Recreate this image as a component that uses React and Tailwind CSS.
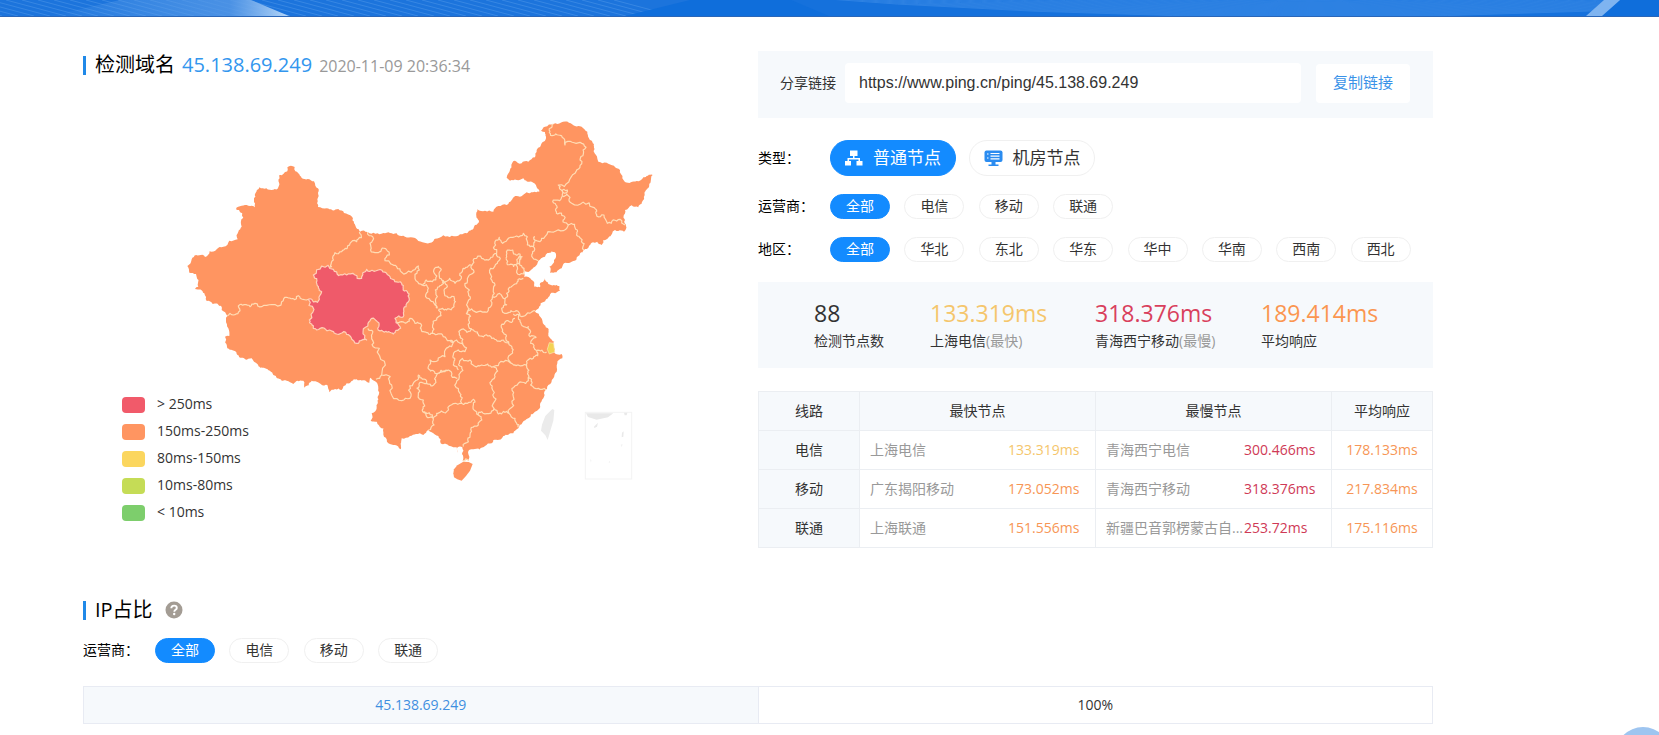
import { useState } from "react";

/* ---------- China map data (three units per pixel) ---------- */

const OUTLINE = "352,172 374,171 376,184 390,197 395,204 413,207 432,214 436,227 446,238 446,258 442,268 444,291 470,295 505,297 522,309 546,320 552,340 570,365 593,366 640,369 680,370 700,377 722,382 745,393 770,400 795,386 820,376 870,373 895,365 915,345 927,332 919,318 922,298 945,302 970,305 985,288 1010,285 1025,270 1035,258 1070,247 1108,245 1100,232 1085,215 1060,205 1040,210 1020,212 1010,203 1020,180 1035,152 1055,160 1075,155 1095,142 1100,120 1120,95 1128,80 1125,66 1113,62 1125,50 1150,42 1197,38 1215,48 1235,50 1252,65 1257,85 1272,110 1278,135 1285,155 1310,158 1332,167 1350,180 1357,205 1365,216 1400,213 1420,202 1448,195 1442,215 1428,240 1422,268 1405,292 1385,286 1365,300 1365,330 1368,348 1362,365 1345,363 1335,360 1315,383 1300,390 1295,405 1265,398 1242,420 1222,440 1200,458 1182,460 1175,475 1140,488 1138,470 1152,450 1158,432 1145,424 1125,440 1105,453 1095,470 1060,482 1062,500 1085,510 1093,530 1110,532 1125,505 1135,522 1168,528 1170,542 1150,548 1135,562 1112,580 1102,598 1095,605 1112,622 1123,645 1135,670 1140,685 1153,695 1150,710 1153,728 1175,732 1177,745 1162,760 1160,785 1150,805 1135,825 1123,845 1120,865 1110,885 1095,905 1075,925 1045,955 1030,970 1000,978 970,990 965,1000 945,1008 910,1018 897,1020 895,1032 895,1050 878,1052 876,1032 877,1012 863,1012 863,1028 860,1012 840,1008 812,1000 805,978 785,967 775,960 760,975 738,972 720,978 695,985 692,1018 675,1005 655,1000 642,980 640,955 620,935 602,932 605,910 620,890 623,860 625,835 612,812 602,803 598,818 590,815 560,808 530,820 515,840 478,847 472,825 440,815 425,812 402,833 400,812 382,812 370,822 350,812 335,812 310,795 285,775 262,762 245,745 225,748 200,732 172,715 165,680 178,678 175,655 168,630 172,618 155,600 153,587 128,582 110,573 103,550 75,537 85,530 78,492 58,488 52,468 65,448 97,434 105,441 140,418 160,410 203,388 205,365 215,350 207,300 198,298 235,287 255,292 252,270 268,232 310,239 325,232 328,195 352,184";

const HAINAN = "880,1055 896,1056 908,1062 900,1082 888,1098 875,1112 862,1108 852,1102 850,1090 852,1078 862,1066";

const QINGHAI = "430,495 490,478 530,495 575,505 590,478 612,484 625,480 660,500 695,520 712,545 718,570 708,590 700,620 675,625 678,638 692,655 670,672 640,665 622,635 605,625 594,640 590,690 565,700 548,690 540,678 500,672 470,662 430,655 418,630 415,568 448,568 455,545 440,520";

const BORDERS = [
  "172,618 190,615 205,588 240,590 255,580 275,590 335,575 350,562 385,557 418,568",
  "568,366 560,395 540,400 515,425 495,428 490,450 478,475",
  "593,366 600,400 620,428 650,420 658,435 645,452 680,470 695,487 745,468 748,480 735,500 738,512 757,526",
  "757,526 787,515 792,478 805,470 812,482 808,500 820,512 802,535 802,560 798,580 802,595",
  "757,526 775,535 780,570 795,585 802,595",
  "820,512 822,540 852,560 852,590 830,600 805,598",
  "805,600 800,630 788,645 788,670",
  "820,515 855,520 870,490 895,468 905,465",
  "905,465 895,500 898,540 892,580 890,613",
  "905,467 935,445 970,435 980,430 975,395 988,382 998,400 1040,378 1060,370 1072,380 1072,405 1090,410 1093,380 1110,395 1125,380 1180,362 1195,345",
  "1090,410 1088,425 1105,452",
  "1195,345 1182,318 1163,312 1158,285 1150,270 1175,262 1178,245 1165,225 1215,190 1230,150 1248,112 1230,97 1185,105 1165,75 1138,68 1150,42",
  "1178,245 1182,238 1192,240 1190,248 1178,247",
  "1178,258 1200,262 1205,280 1270,292 1280,318 1302,315 1312,340 1350,328 1366,345",
  "1195,345 1222,360 1232,385 1242,420",
  "1008,445 1028,420 1050,432 1048,460 1012,464 1008,445",
  "1045,445 1056,440 1062,475 1060,492 1040,488 1038,465 1045,445",
  "980,432 982,460 965,500 970,540 967,560",
  "967,560 1005,567 1010,550 1035,522 1060,505",
  "1005,567 995,595 1010,610 1038,602 1050,618 1070,612 1085,606 1095,602",
  "890,613 925,605 965,585 967,560",
  "888,610 898,635 910,660 930,678 965,685 1000,690 1018,705",
  "905,655 875,658 868,675 880,705",
  "675,650 695,635 720,625 735,640 750,640 760,665 788,670 820,680 860,690 880,700",
  "840,690 845,710 825,740 780,750 775,770 795,790 820,785 835,780 862,805",
  "880,705 885,725 850,735 850,765 865,780",
  "865,765 900,750 935,765 970,770 1020,758 1045,765 1070,768",
  "1018,705 1020,735 1022,758",
  "1035,625 1010,632 998,660 1008,690 1018,705",
  "1030,612 1050,630 1075,650 1080,680 1098,682 1082,700 1100,722 1130,726",
  "1100,722 1090,745 1070,768 1075,795 1082,825 1105,835 1128,840",
  "1075,800 1045,820 1030,860 1017,910",
  "970,770 975,800 968,840 972,895",
  "925,915 935,905 972,895 985,912 1017,910 1035,925 1045,952",
  "925,915 925,945 900,975 880,1010",
  "758,905 770,920 800,910 830,905 870,880 910,868 912,900 925,915",
  "865,765 868,800 870,850 875,878",
  "740,835 770,820 795,820 800,795 832,780",
  "740,835 745,855 760,870 758,905 790,925 792,945 775,960",
  "635,795 665,825 695,872 720,865 730,820 745,795 770,818",
  "594,655 605,680 628,715 635,795 618,808",
  "878,1053 896,1053",
];

/* Midpoint displacement gives the coast and the borders their rough edge. */
function roughen(data, closed, strength) {
  let pts = data.split(" ").map((p) => p.split(",").map(Number));
  if (closed) pts.push(pts[0]);
  let seed = 7;
  const rand = () => {
    seed = (seed * 16807) % 2147483647;
    return seed / 2147483647 - 0.5;
  };
  for (let pass = 0; pass < 3; pass++) {
    const next = [pts[0]];
    for (let i = 1; i < pts.length; i++) {
      const [ax, ay] = pts[i - 1];
      const [bx, by] = pts[i];
      const dx = bx - ax;
      const dy = by - ay;
      if (Math.hypot(dx, dy) > 7) {
        const k = rand() * strength;
        next.push([(ax + bx) / 2 - dy * k, (ay + by) / 2 + dx * k]);
      }
      next.push(pts[i]);
    }
    pts = next;
  }
  return "M" + pts.map(([x, y]) => `${x.toFixed(1)} ${y.toFixed(1)}`).join("L") + (closed ? "Z" : "");
}

const outlinePath = roughen(OUTLINE, true, 0.4);
const qinghaiPath = roughen(QINGHAI, true, 0.6);
const borderPath = BORDERS.map((b) => roughen(b, false, 0.7)).join("");

function ChinaMap() {
  return (
    <svg viewBox="0 0 1500 1130" role="img" aria-label="全国响应时间分布" className="block w-[500px] max-w-full">
      <g fill="#ff9561">
        <path d={outlinePath} />
        <polygon points={HAINAN} />
      </g>
      <path d={borderPath} fill="none" stroke="#ffdcb4" strokeWidth="3.6" strokeLinejoin="round" />
      <path d={qinghaiPath} fill="#ef5a6a" stroke="#ffd0b8" strokeWidth="3.6" strokeLinejoin="round" />
      <polygon points="1138,698 1151,700 1154,726 1138,732 1132,718" fill="#f3d254" stroke="#fbe9b4" strokeWidth="2" />
      <polygon points="1140,904 1147,897 1153,900 1150,932 1141,962 1133,990 1126,976 1113,962 1116,944 1126,918" fill="#ebebeb" />
      <rect x="1246" y="907" width="139" height="200" fill="none" stroke="#f3f3f3" strokeWidth="3" />
      <g fill="#e9e9e9">
        <path d="M1248 910l82 0l-16 12l-34 7l-26-8z" />
        <path d="M1272 950l12-12l-3 12l-8 4zM1362 908h10l-2 8h-6zM1356 968l5-4l-1 16l-5 2z" />
        <path d="M1260 1048l4 2l-1 8zM1352 1004l6-2l-3 10zM1318 1052l3 5l-5 2z" opacity=".6" />
      </g>
    </svg>
  );
}

/* ---------- small drawings ---------- */

const LINES = Array.from({ length: 60 }, (_, i) => i);

function Banner() {
  return (
    <header className="h-[17px] overflow-hidden border-b border-[#2a66b8] bg-[#1571dc]">
      <svg viewBox="0 0 1659 16" preserveAspectRatio="none" className="block h-4 w-full" aria-hidden="true">
        <defs>
          <linearGradient id="beam" x1="0" x2="1">
            <stop offset="0" stopColor="#6aaaf0" stopOpacity="0" />
            <stop offset="0.75" stopColor="#5598e6" stopOpacity="0.8" />
            <stop offset="1" stopColor="#b5d6f8" />
          </linearGradient>
        </defs>
        <rect width="690" height="16" fill="#1c74dc" />
        <g fill="none" stroke="#5fa3ee" strokeWidth="1" opacity=".4">
          {LINES.map((i) => (
            <path key={i} d={`M${i * 16 - 330} 0L${i * 16 - 270} 16`} />
          ))}
        </g>
        <path d="M50 16L120 0H251L289 16Z" fill="url(#beam)" />
        <g fill="none" stroke="#3f8ee8" strokeWidth="1" opacity=".6">
          {LINES.map((i) => (
            <path key={i} d={`M${760 + i * 14} ${-6}Q${1310} ${40 - i} ${1860 - i * 14} -6`} />
          ))}
        </g>
        <path d="M625 16L690 0H791L829 16Z" fill="#0f6edb" />
        <path d="M1602 16L1620 0H1659V16Z" fill="#0f6edb" />
        <path d="M1586 16L1604 0H1620L1602 16Z" fill="#7fb4f0" />
      </svg>
    </header>
  );
}

function NetworkIcon() {
  return (
    <svg viewBox="0 0 18 16" className="h-4 w-[18px]" fill="currentColor" aria-hidden="true">
      <path d="M5 0.500h7.500v5.500h-3v2h5.500v3h2.500v4.500h-6v-4.500h2v-1.500h-9.500v1.500h2v4.500h-6v-4.500h2.500v-3h5.500v-2h-3z" />
    </svg>
  );
}

function ServerIcon() {
  return (
    <svg viewBox="0 0 19 17" className="h-[17px] w-[19px] text-[#2b8cf0]" aria-hidden="true">
      <rect x="0.500" y="0.500" width="18" height="11.500" rx="2" fill="currentColor" />
      <path d="M7.500 12h4v2.500h3v1.500h-10v-1.500h3z" fill="currentColor" />
      <path d="M3 4h1.500M3 8h1.500M6.500 3.500h9M6.500 6.200h9M6.500 8.900h9" stroke="#fff" strokeWidth="1.200" />
    </svg>
  );
}

function HelpIcon() {
  return (
    <svg viewBox="0 0 18 18" className="size-[18px]" aria-hidden="true">
      <circle cx="9" cy="9" r="8.500" fill="#a39c94" />
      <path d="M6.300 7.200c0-1.600 1.200-2.600 2.800-2.600s2.700 1 2.700 2.300c0 1.900-2.500 1.900-2.500 3.800" fill="none" stroke="#fff" strokeWidth="1.900" />
      <circle cx="9.200" cy="13" r="1.200" fill="#fff" />
    </svg>
  );
}

/* ---------- controls ---------- */

function Pill({ active, onClick, children }) {
  return (
    <button
      type="button"
      aria-pressed={active}
      onClick={onClick}
      className={
        "h-[25px] w-[60px] rounded-full border pb-[2px] text-sm leading-5 " +
        (active ? "border-[#138bff] bg-[#138bff] text-white" : "border-[#f0f0f0] bg-white text-[#333]")
      }
    >
      {children}
    </button>
  );
}

function PillRow({ label, items }) {
  const [picked, setPicked] = useState(items[0]);
  return (
    <div className="flex items-center" role="group" aria-label={label}>
      <span className="w-[72px] shrink-0 pb-[2px] text-sm text-black">{label}：</span>
      <div className="grid max-w-[595px] flex-1 grid-cols-8">
        {items.map((item) => (
          <Pill key={item} active={item === picked} onClick={() => setPicked(item)}>
            {item}
          </Pill>
        ))}
      </div>
    </div>
  );
}

function TypeButton({ active, icon, onClick, children }) {
  return (
    <button
      type="button"
      aria-pressed={active}
      onClick={onClick}
      className={
        "flex h-9 w-[126px] items-center justify-center gap-[10px] rounded-full border text-[17px] " +
        (active ? "border-[#138bff] bg-[#138bff] text-white" : "border-[#f0f0f0] bg-white text-[#333]")
      }
    >
      {icon}
      {children}
    </button>
  );
}

/* ---------- content ---------- */

const LEGEND = [
  ["bg-[#f15a6a]", "> 250ms"],
  ["bg-[#ff9561]", "150ms-250ms"],
  ["bg-[#fbd65e]", "80ms-150ms"],
  ["bg-[#c5dc56]", "10ms-80ms"],
  ["bg-[#7dce6c]", "< 10ms"],
];

const STATS = [
  ["88", "检测节点数", "", "text-[#333]"],
  ["133.319ms", "上海电信", "(最快)", "text-[#f5c66c]"],
  ["318.376ms", "青海西宁移动", "(最慢)", "text-[#d9405c]"],
  ["189.414ms", "平均响应", "", "text-[#fb9650]"],
];

const ROWS = [
  ["电信", "上海电信", "133.319ms", "text-[#f5c66c]", "青海西宁电信", "300.466ms", "178.133ms"],
  ["移动", "广东揭阳移动", "173.052ms", "text-[#f79656]", "青海西宁移动", "318.376ms", "217.834ms"],
  ["联通", "上海联通", "151.556ms", "text-[#f79656]", "新疆巴音郭楞蒙古自...", "253.72ms", "175.116ms"],
];

const CARRIERS = ["全部", "电信", "移动", "联通"];
const REGIONS = ["全部", "华北", "东北", "华东", "华中", "华南", "西南", "西北"];

function NodeCell({ name, time, tone }) {
  return (
    <td className="border border-[#ebeef2] pl-[10px] text-left">
      <div className="flex">
        <span className="w-[138px] shrink-0 whitespace-nowrap text-[#999]">{name}</span>
        <span className={tone}>{time}</span>
      </div>
    </td>
  );
}

export default function App() {
  const [type, setType] = useState("normal");
  return (
    <div className="bg-white font-['Open_Sans','Noto_Sans_CJK_SC',sans-serif] text-sm text-[#333]">
      <Banner />
      <main className="pr-[226px] pb-[10px] pl-[83px]">
        <div className="grid grid-cols-2 pt-[34px]">
          <section>
            <div className="flex h-7 items-center">
              <span className="mr-[9px] h-[19px] w-[3px] bg-[#2089e8]" />
              <h1 className="flex items-baseline text-xl leading-7 text-black">
                检测域名
                <span className="ml-[7px] text-[#3296ee]">45.138.69.249</span>
                <time className="ml-[7px] text-base text-[#999]">2020-11-09 20:36:34</time>
              </h1>
            </div>
            <div className="grid pt-[31px]">
              <div className="col-start-1 row-start-1 pl-[87px]">
                <ChinaMap />
              </div>
              <ul className="z-10 col-start-1 row-start-1 mt-[281px] w-fit pl-[39px]">
                {LEGEND.map(([color, text]) => (
                  <li key={text} className="flex h-[27px] items-center">
                    <span className={"mr-3 h-4 w-[23px] rounded " + color} />
                    <span className="pb-[2px] leading-5">{text}</span>
                  </li>
                ))}
              </ul>
            </div>
          </section>

          <section>
            <div className="flex h-[67px] items-center bg-[#f6f9fc] pr-[23px] pb-[3px] pl-[22px]">
              <label htmlFor="share" className="shrink-0">
                分享链接
              </label>
              <input
                id="share"
                readOnly
                defaultValue="https://www.ping.cn/ping/45.138.69.249"
                className="mr-[15px] ml-[9px] h-10 min-w-0 flex-1 rounded-sm bg-white px-[14px] font-['Liberation_Sans',Arial,sans-serif] text-base text-[#333]"
              />
              <button type="button" className="h-[39px] w-[94px] shrink-0 rounded-sm bg-white text-[15px] text-[#3a92e8]">
                复制链接
              </button>
            </div>

            <div className="mt-[22px] flex items-center" role="group" aria-label="类型">
              <span className="w-[72px] text-black">类型：</span>
              <div className="flex gap-[13px]">
                <TypeButton active={type === "normal"} icon={<NetworkIcon />} onClick={() => setType("normal")}>
                  普通节点
                </TypeButton>
                <TypeButton active={type === "room"} icon={<ServerIcon />} onClick={() => setType("room")}>
                  机房节点
                </TypeButton>
              </div>
            </div>
            <div className="mt-[18px] flex flex-col gap-[18px]">
              <PillRow label="运营商" items={CARRIERS} />
              <PillRow label="地区" items={REGIONS} />
            </div>

            <dl className="mt-5 grid h-[86px] grid-cols-[116px_165px_166px_1fr] content-center bg-[#f6f9fc] pl-[56px]">
              {STATS.map(([value, name, note, tone]) => (
                <div key={value} className="flex flex-col-reverse">
                  <dt className="leading-6">
                    {name}
                    <span className="text-[#999]">{note}</span>
                  </dt>
                  <dd className={"text-[23px] leading-8 " + tone}>{value}</dd>
                </div>
              ))}
            </dl>

            <table className="mt-[23px] w-full table-fixed border-collapse text-center">
              <colgroup>
                <col className="w-[15%]" />
                <col className="w-[35%]" />
                <col className="w-[35%]" />
                <col className="w-[15%]" />
              </colgroup>
              <thead>
                <tr className="h-[39px] bg-[#f6f9fc]">
                  {["线路", "最快节点", "最慢节点", "平均响应"].map((h) => (
                    <th key={h} scope="col" className="border border-[#ebeef2] font-normal">
                      {h}
                    </th>
                  ))}
                </tr>
              </thead>
              <tbody>
                {ROWS.map(([line, fast, fastTime, fastTone, slow, slowTime, avg]) => (
                  <tr key={line} className="h-[39px]">
                    <th scope="row" className="border border-[#ebeef2] bg-[#f6f9fc] font-normal">
                      {line}
                    </th>
                    <NodeCell name={fast} time={fastTime} tone={fastTone} />
                    <NodeCell name={slow} time={slowTime} tone="text-[#cf3a56]" />
                    <td className="border border-[#ebeef2] text-[#f79656]">{avg}</td>
                  </tr>
                ))}
              </tbody>
            </table>
          </section>
        </div>

        <section className="mt-12">
          <div className="flex h-7 items-center">
            <span className="mr-[9px] h-[19px] w-[3px] bg-[#2089e8]" />
            <h2 className="text-xl leading-7 text-black">IP占比</h2>
            <button type="button" aria-label="说明" className="ml-3">
              <HelpIcon />
            </button>
          </div>
          <div className="mt-[14px]">
            <PillRow label="运营商" items={CARRIERS} />
          </div>
          <table className="mt-[23px] w-full table-fixed border-collapse text-center">
            <tbody>
              <tr className="h-[37px]">
                <td className="border border-[#e8ebf3] bg-[#f6f9fc]">
                  <a href="#ip" className="text-[#3f8fe0]">
                    45.138.69.249
                  </a>
                </td>
                <td className="border border-[#e8ebf3]">100%</td>
              </tr>
            </tbody>
          </table>
        </section>
      </main>
      <button
        type="button"
        aria-label="返回顶部"
        className="fixed right-[-12px] bottom-[-48px] size-14 rounded-full bg-[#9ec5f0]"
      />
    </div>
  );
}
